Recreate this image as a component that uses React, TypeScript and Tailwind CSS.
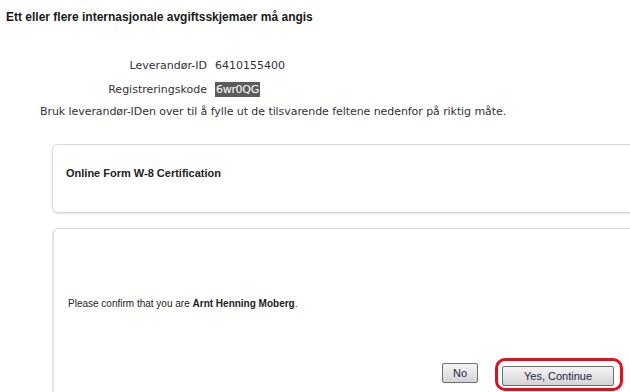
import React from 'react';

export default function App() {
  return (
    <div className="w-[630px] h-[392px] overflow-hidden bg-white text-[#222]">
      <h1 className="pt-[9px] pl-[6px] text-[12px] leading-[16px] font-bold font-['Liberation_Sans',Arial,sans-serif] text-[#1a1a1a]">
        Ett eller flere internasjonale avgiftsskjemaer må angis
      </h1>

      <div className="font-['DejaVu_Sans',Verdana,sans-serif] text-[11px] text-[#333]">
        <div className="mt-[33px] grid grid-cols-[208px_1fr] gap-y-[8px] leading-[16px]">
          <span className="text-right pr-[1px]">Leverandør-ID</span>
          <span className="pl-[7px]">6410155400</span>
          <span className="text-right pr-[1px]">Registreringskode</span>
          <span className="pl-[7px]">
            <span className="bg-[#5c5c5c] text-white px-[1px] py-[1px] tracking-[-0.3px]">6wr0QG</span>
          </span>
        </div>
        <p className="mt-[6px] pl-[40px] leading-[16px] tracking-[-0.07px]">
          Bruk leverandør-IDen over til å fylle ut de tilsvarende feltene nedenfor på riktig måte.
        </p>
      </div>

      <div className="font-['Liberation_Sans',Arial,sans-serif]">
        <div className="mt-[24px] ml-[52px] w-[600px] h-[69px] border border-[#d8d8d8] rounded-[6px] shadow-[0_1px_2px_rgba(0,0,0,0.12)] pt-[20px] pl-[13px]">
          <h2 className="text-[11px] leading-[16px] font-bold text-[#222]">Online Form W-8 Certification</h2>
        </div>

        <div className="mt-[15px] ml-[52px] w-[600px] h-[200px] border border-[#d8d8d8] border-l-2 border-l-[#e4e4e4] rounded-[6px] pt-[67px] pl-[14px]">
          <p className="text-[10px] leading-[16px] text-[#222]">
            Please confirm that you are <span className="font-bold">Arnt Henning Moberg</span>.
          </p>
          <div className="mt-[51px] flex justify-end gap-[24px] pr-[37px]">
            <button className="w-[36px] h-[20px] border border-[#707070] rounded-[2px] bg-gradient-to-b from-[#f4f4f4] via-[#e6e6e6] to-[#d2d2d2] text-[11px] leading-[18px] text-[#1c1c4a]">
              No
            </button>
            <div className="relative">
              <button className="w-[112px] h-[20px] border border-[#707070] rounded-[2px] bg-gradient-to-b from-[#f4f4f4] via-[#e6e6e6] to-[#d2d2d2] text-[11px] leading-[18px] text-[#1c1c4a]">
                Yes, Continue
              </button>
              <span className="absolute -left-[7px] -top-[5px] -right-[9px] -bottom-[4px] border-[3px] border-[#e3101c] rounded-[10px] pointer-events-none" />
            </div>
          </div>
        </div>
      </div>
    </div>
  );
}
